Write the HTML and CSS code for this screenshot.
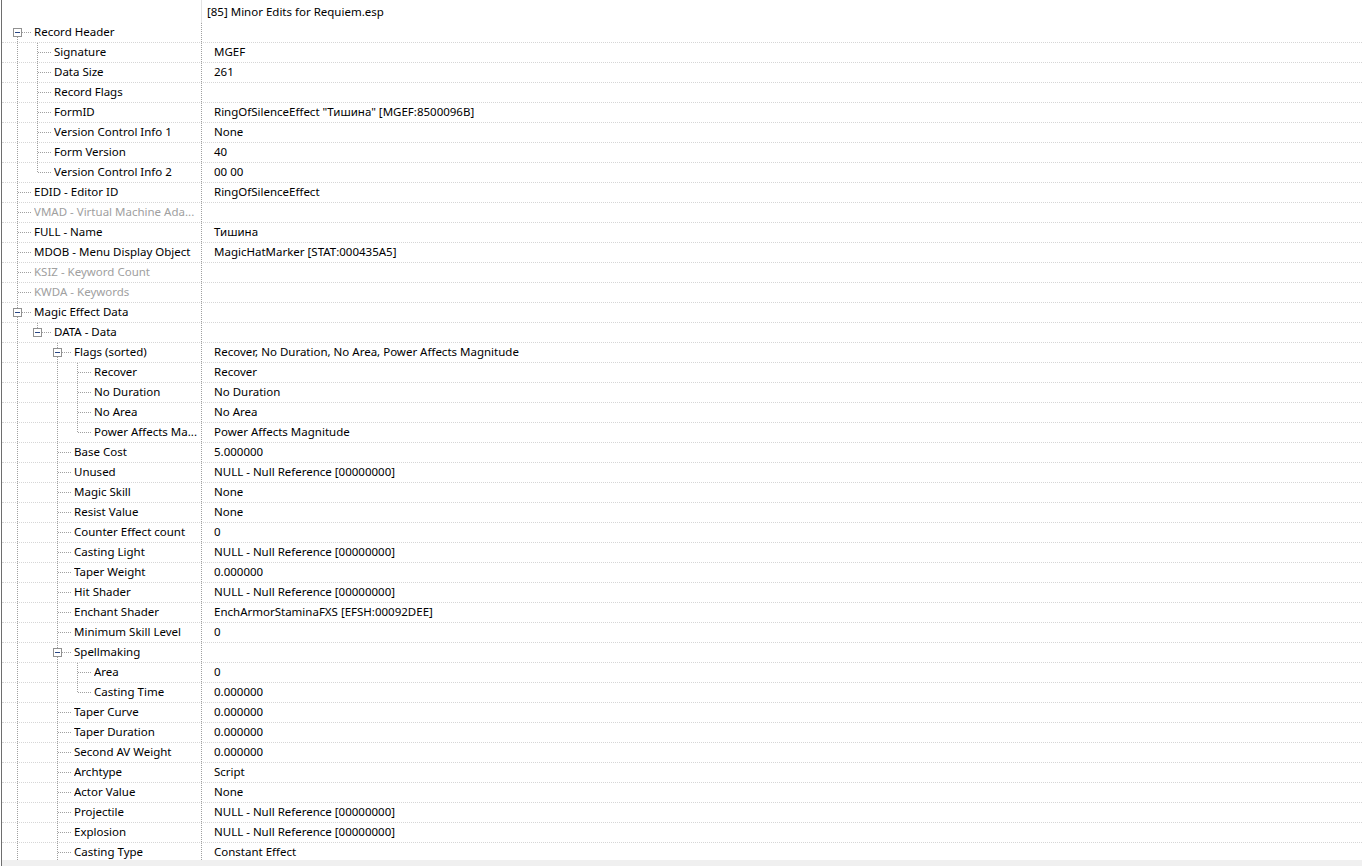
FILE: index.html
```html
<!DOCTYPE html>
<html lang="en">
<head>
  <meta charset="UTF-8" />
  <title>Record View</title>
  <link rel="stylesheet" href="styles.css">
</head>
<body>
  <div class="view">
    <div class="head">
      <div class="head-name"></div>
      <div class="head-value">[85] Minor Edits for Requiem.esp</div>
    </div>
    <div id="tree" class="tree"></div>
    <div class="hscroll"></div>
  </div>

  <script>
    // [level, name, value, disabled]
    const rows = [
      [0, "Record Header"],
      [1, "Signature", "MGEF"],
      [1, "Data Size", "261"],
      [1, "Record Flags"],
      [1, "FormID", "RingOfSilenceEffect \"Тишина\" [MGEF:8500096B]"],
      [1, "Version Control Info 1", "None"],
      [1, "Form Version", "40"],
      [1, "Version Control Info 2", "00 00"],
      [0, "EDID - Editor ID", "RingOfSilenceEffect"],
      [0, "VMAD - Virtual Machine Ada...", "", true],
      [0, "FULL - Name", "Тишина"],
      [0, "MDOB - Menu Display Object", "MagicHatMarker [STAT:000435A5]"],
      [0, "KSIZ - Keyword Count", "", true],
      [0, "KWDA - Keywords", "", true],
      [0, "Magic Effect Data"],
      [1, "DATA - Data"],
      [2, "Flags (sorted)", "Recover, No Duration, No Area, Power Affects Magnitude"],
      [3, "Recover", "Recover"],
      [3, "No Duration", "No Duration"],
      [3, "No Area", "No Area"],
      [3, "Power Affects Ma...", "Power Affects Magnitude"],
      [2, "Base Cost", "5.000000"],
      [2, "Unused", "NULL - Null Reference [00000000]"],
      [2, "Magic Skill", "None"],
      [2, "Resist Value", "None"],
      [2, "Counter Effect count", "0"],
      [2, "Casting Light", "NULL - Null Reference [00000000]"],
      [2, "Taper Weight", "0.000000"],
      [2, "Hit Shader", "NULL - Null Reference [00000000]"],
      [2, "Enchant Shader", "EnchArmorStaminaFXS [EFSH:00092DEE]"],
      [2, "Minimum Skill Level", "0"],
      [2, "Spellmaking"],
      [3, "Area", "0"],
      [3, "Casting Time", "0.000000"],
      [2, "Taper Curve", "0.000000"],
      [2, "Taper Duration", "0.000000"],
      [2, "Second AV Weight", "0.000000"],
      [2, "Archtype", "Script"],
      [2, "Actor Value", "None"],
      [2, "Projectile", "NULL - Null Reference [00000000]"],
      [2, "Explosion", "NULL - Null Reference [00000000]"],
      [2, "Casting Type", "Constant Effect"]
    ];

    // the list keeps going below the fold: more DATA fields, then more records
    const levels = rows.map(r => r[0]).concat([2, 0]);

    const hasNext = (i, lvl) => {
      for (let j = i + 1; j < levels.length; j++) {
        if (levels[j] === lvl) return true;
        if (levels[j] < lvl) return false;
      }
      return false;
    };

    const ancestor = (i, lvl) => {
      for (let j = i - 1; j >= 0; j--) {
        if (levels[j] === lvl) return j;
      }
      return -1;
    };

    const tree = document.getElementById("tree");

    rows.forEach(([lvl, name, value, off], i) => {
      const row = document.createElement("div");
      row.className = "row" + (off ? " off" : "");

      const cell = document.createElement("div");
      cell.className = "name";

      for (let k = 0; k < lvl; k++) {
        const g = document.createElement("span");
        g.className = "guide" + (hasNext(ancestor(i, k), k) ? " line" : "");
        cell.appendChild(g);
      }

      const conn = document.createElement("span");
      conn.className = "conn" + (i === 0 ? " first" : "") + (hasNext(i, lvl) ? " more" : "");
      if (levels[i + 1] > lvl) {
        const box = document.createElement("span");
        box.className = "box";
        conn.appendChild(box);
      }
      cell.appendChild(conn);

      const label = document.createElement("span");
      label.className = "label";
      label.textContent = name;
      cell.appendChild(label);

      const val = document.createElement("div");
      val.className = "value";
      val.textContent = value || "";

      row.appendChild(cell);
      row.appendChild(val);
      tree.appendChild(row);
    });
  </script>
</body>
</html>
```

FILE: styles.css
```css
html, body {
  margin: 0;
  height: 100%;
  overflow: hidden;
  background-color: #fff;
}

body {
  font-family: 'Noto Sans', 'Liberation Sans', sans-serif;
  font-size: 11.5px;
  color: #000;
}

.view {
  height: 866px;
  margin-left: 1px;
  border-left: 1px solid #6e6e6e;
  display: flex;
  flex-direction: column;
}

.head {
  display: flex;
  height: 23px;
  flex: none;
}

.head-name {
  width: 200px;
  box-sizing: border-box;
  border-right: 1px solid #e3e3e3;
}

.head-value {
  padding-left: 5px;
  line-height: 23px;
  white-space: nowrap;
}

.tree {
  flex: 1;
  overflow: hidden;
}

.hscroll {
  height: 6px;
  flex: none;
  background-color: #f0f0f0;
}

.row {
  display: flex;
  height: 19px;
  line-height: 18px;
  border-bottom: 1px dotted #d6d6d6;
  white-space: nowrap;
}

.row.off {
  color: #a0a0a0;
}

.name {
  display: flex;
  width: 200px;
  flex: none;
  box-sizing: border-box;
  padding-left: 5px;
  border-right: 1px dotted #a0a0a0;
}

.guide {
  flex: none;
  width: 20px;
}

.guide.line {
  background: repeating-linear-gradient(#a0a0a0 0 1px, transparent 1px 2px) 10px 0 / 1px 100% no-repeat;
}

/* elbow: vertical piece plus the tick to the label */
.conn {
  flex: none;
  width: 27px;
  background:
    repeating-linear-gradient(to right, #a0a0a0 0 1px, transparent 1px 2px) 11px 9px / 13px 1px no-repeat,
    repeating-linear-gradient(#a0a0a0 0 1px, transparent 1px 2px) 10px 0 / 1px 10px no-repeat;
}

.conn.more {
  background-size: 13px 1px, 1px 100%;
}

.conn.first {
  background-position: 11px 9px, 10px 10px;
  background-size: 13px 1px, 1px 9px;
}

.box {
  display: block;
  width: 9px;
  height: 9px;
  box-sizing: border-box;
  margin: 5px 0 0 6px;
  border: 1px solid #919191;
  background: #fff linear-gradient(#2a4785, #2a4785) center / 5px 1px no-repeat;
}

.label {
  flex: 1;
  min-width: 0;
  overflow: hidden;
}

.value {
  flex: 1;
  padding-left: 12px;
  overflow: hidden;
}
```
